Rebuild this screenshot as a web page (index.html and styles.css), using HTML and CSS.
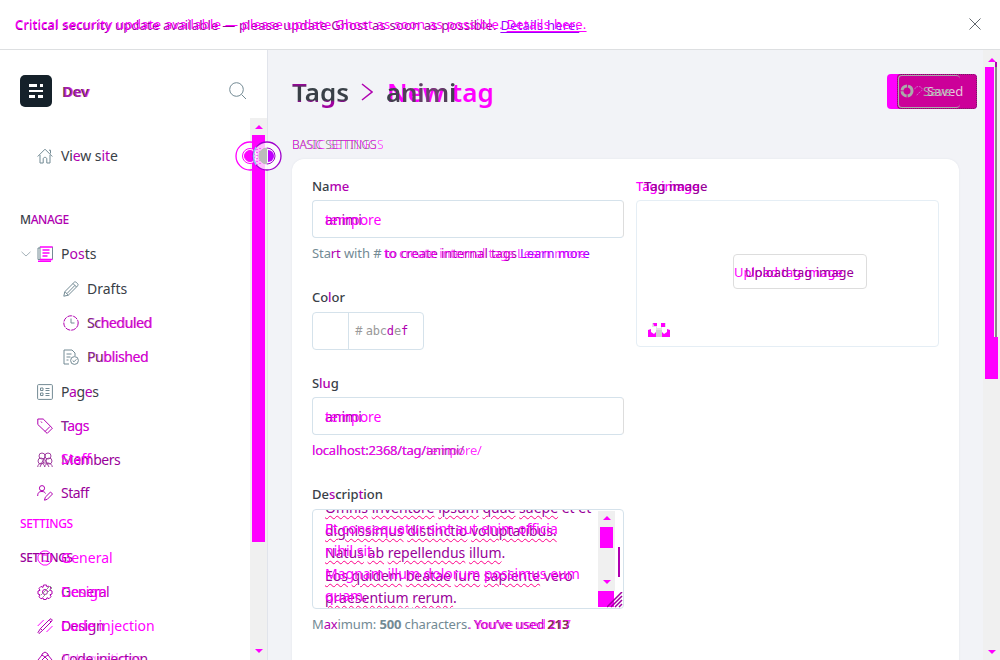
FILE: index.html
```
<!DOCTYPE html>
<html lang="en"><head><meta charset="utf-8"><title>Tags</title><link rel="stylesheet" href="styles.css"></head>
<body>
<header class="banner">
  <div class="stack"><p class="b banner-base">Critical security update available — please update Ghost as soon as possible. <u>Details here.</u></p><p class="m banner-new">Critical security update available — please update Ghost as soon as possible. <u>Details here.</u></p></div>
  <svg class="close" viewBox="0 0 12 12"><path d="M.5.5l11 11M11.5.5l-11 11"/></svg>
</header>
<div class="app">
<aside class="sidebar">
  <div class="brand">
    <svg class="logo" viewBox="0 0 32 32"><rect width="32" height="32" rx="5" fill="#15212a"/><path fill="#fff" d="M9 9h8v3H9zM20 9h3v3h-3zM9 15h14v2H9zM9 20h6v3H9zM18 20h5v3h-5z"/></svg>
    <strong class="stack"><span>Dev</span><span class="m half">Dev</span></strong>
    <svg class="search" viewBox="0 0 18 18"><circle cx="7.5" cy="7.5" r="6.8"/><path d="M12.5 12.5l4.5 4.5"/></svg>
  </div>
  <div class="scroller">
    <nav class="nav">
      <a class="row view"><svg viewBox="0 0 16 16"><path d="M.7 8.5L8 1.2l7.3 7.3M3 7v8h3.2v-4c0-2.2 3.6-2.2 3.6 0v4H13V7M12 2.2h1.5v3.3"/></svg><span>Vi<i>e</i>w s<i>it</i>e</span></a>
      <h2 class="head">M<i>ANAGE</i></h2>
      <a class="row"><svg class="caret" viewBox="0 0 10 6"><path d="M.5.8L5 5 9.500.8"/></svg><svg class="post" viewBox="0 0 16 16"><path d="M3 13.500H1V2h2M3 .7v12.800M15.500.7v12.800"/><path class="pm" d="M3 1h12.500M3 13.500h12.500M1 15.300h13" stroke-width="1.500"/><path class="pm" d="M5.500 4h7M5.500 7h7M5.500 10h5" stroke-width="1.400"/></svg><span>P<i>os</i>ts</span></a>
      <a class="row sub"><svg viewBox="0 0 16 16"><path d="M.8 15.200l1-4.500L11.500 1c1-1 4.500 2.500 3.500 3.500l-9.700 9.700zM2 10.700l3.300 3.500M10 2.500l3.500 3.500M4 12.500L12 4.300"/></svg><span>Drafts</span></a>
      <a class="row sub"><svg viewBox="0 0 16 16"><circle class="pb" cx="8" cy="8" r="7.200" stroke-dasharray="5 1"/><path d="M8 3.500V8h3.500"/></svg><div class="stack"><span class="tight">Sc<i>heduled</i></span><span class="m trail tight">Scheduled</span></div></a>
      <a class="row sub"><svg viewBox="0 0 16 16"><path d="M6 15H1V1h8l3 3v3M3.500 5h5M3.500 8h4M3.500 11h2"/><circle cx="11.500" cy="11.500" r="3.900"/><path d="M9.700 11.500l1.300 1.300 2.400-2.500"/></svg><div class="stack"><span class="tight">Pu<i>blished</i></span><span class="m trail tighter">Published</span></div></a>
      <a class="row lower"><svg viewBox="0 0 16 16"><rect x=".6" y=".6" width="14.800" height="14.800" rx="1"/><path d="M3.500 4H6v2.500H3.500zM3.500 9H6v2.500H3.500zM8.500 4.500h4M8.500 6.500h4M8.500 9.500h4M8.500 11.500h4"/></svg><span class="tight">P<i>a</i>g<i>e</i>s</span></a>
      <a class="row"><svg class="pb" viewBox="0 0 16 16"><path d="M.8 1h5.400l9.200 9.200-5.200 5.200L.8 6.500zM4 3.500l1 1.300M13 8.500l-5 5"/></svg><div class="stack"><span class="tighter">T<i>ags</i></span><span class="m trail tighter after">Tags</span></div></a>
      <a class="row"><svg class="pb mixed" viewBox="0 0 16 16"><circle cx="5" cy="4" r="3"/><circle cx="11" cy="4" r="3"/><circle cx="4" cy="9" r="3"/><circle cx="12" cy="9" r="3"/><path d="M.7 15c.5-5 6.300-5 7 0 .7-5 7-5 7.600 0M3 15l4-9 5 9M5.500 11h6"/></svg><div class="stack"><span class="b tighter">Members</span><span class="m raise">Staff</span></div></a>
      <a class="row staff"><svg class="pb" viewBox="0 0 16 16"><circle cx="5" cy="3.200" r="2.600"/><path d="M.7 11c0-3.500 1.500-4.500 4.300-4.500 2 0 3 .8 3.500 2M7.500 15.200l.8-3L13.500 7l2 2-5.200 5.300z"/></svg><span class="b tighter">Staff</span></a>
      <h2 class="head m first">SETTINGS</h2>
      <div class="row mix"><h2 class="b">SETTINGS</h2><div class="over"><svg class="pmx" viewBox="0 0 16 16"><path d="M6 1h4l3 2 2 3v4l-2 3-3 2H6l-3-2-2-3V6l2-3zM5 5h6M5 11h6"/></svg><span class="m">General</span></div></div>
      <a class="row"><svg class="pb" viewBox="0 0 16 16"><path d="M6.500 1h3l.5 2 2-1 2 2-1 2 2 1v3l-2 .7 1 2-2 2-2-1-.8 1.800H6.500L6 13.800l-2 1-2-2 1-2L1 10V7l2-.6-1-2 2-2 2 1z"/><circle cx="8" cy="8" r="2.500"/><path class="wand" d="M4 11l9-9 2 2-9 9"/></svg><div class="stack"><span class="tighter">G<i>eneral</i></span><span class="m">Design</span></div></a>
      <a class="row"><svg class="pb" viewBox="0 0 16 16"><path d="M1 14.500l2.500-4L12 2l2-1.300L15.300 2 14 4l-8.500 8.500-3.500 3zM12.500 2.500l1.500 1.500M3.500 10.500l2 2"/><path class="pmx" d="M.7 8l6-6M9.500 14l6-6"/></svg><div class="stack"><span class="b tight">Design</span><span class="m">Code injection</span></div></a>
      <a class="row last"><svg class="pb" viewBox="0 0 16 16"><path d="M5 5V3l3-2 3 2v2M1 9l4-5 3 2 3-2 4 5-4 5H5zM5 9l3-3 3 3-3 3z"/></svg><div class="stack"><span class="b tighter">Code injection</span><span class="m trail">Integrations</span></div></a>
    </nav>
    <div class="bar side"><div class="up"></div><div class="thumb"></div><div class="down"></div></div>
  </div>
  <svg class="handles" viewBox="0 0 48 34"><circle cx="15" cy="17" r="14" stroke="#f0f" stroke-width="1.300"/><circle cx="15" cy="17" r="7.500" fill="#fff" stroke="#f0f"/><circle cx="15" cy="17" r="5.500" fill="#f0f" stroke="#f0f"/><circle cx="32" cy="17" r="14" fill="#fff" fill-opacity=".75" stroke="#a000cc" stroke-width="1.300"/><path d="M19 9v16M22 7v20M25 9v18" stroke="#f0f" stroke-dasharray="1 2"/><path d="M32 9a8 8 0 0 0 0 16" fill="#bbb" stroke="#bbb"/><path d="M32 9a8 8 0 0 1 0 16" stroke="#a000cc"/><path d="M33 11a6 6 0 0 1 0 12z" fill="#c000ff" stroke="none"/><path d="M21 8q-5 9 0 18" stroke="#8ccbed" stroke-width="1.500"/></svg>
</aside>
<main class="main">
  <div class="content">
    <div class="top">
      <h1><span class="title">Tags</span><svg class="chev" viewBox="0 0 12 18"><path d="M1 1l10 8L1 17"/></svg><div class="stack"><span class="m newtag">New tag</span><span class="animi">animi</span></div></h1>
      <div class="save"><div class="stack saved"><span>Saved</span><span class="retry"><svg viewBox="0 0 14 14"><circle cx="7" cy="7" r="5" stroke="#aaa" stroke-width="3" stroke-dasharray="7 1" fill="none"/></svg><svg class="tick" viewBox="0 0 10 12"><path d="M1 4c0-4 8-4 8 0 0 3-4 3-6 7"/></svg>Save</span></div></div>
    </div>
    <h3 class="stack section"><span class="grey">BASIC SETTINGS</span><span class="m">BASIC SETTINGS</span></h3>
    <section class="card">
      <div class="fields">
        <label>Na<i>me</i></label>
        <div class="input"><div class="stack"><span class="b dense">animi</span><span class="m">tempore</span></div></div>
        <div class="help stack n"><span class="first-hint">Sta<i>rt</i> with # <i>to create internal tags</i> <u>Learn more</u></span><span class="m hint second-hint"><q>Start with # </q>to create internal tags Learn more</span></div>
        <label>Co<i>l</i>or</label>
        <div class="color"><span class="swatch"></span><span class="hash">#</span><span class="mono">abc<i>d</i>e<i>f</i></span></div>
        <label>S<i>lu</i>g</label>
        <div class="input"><div class="stack"><span class="b dense">animi</span><span class="m">tempore</span></div></div>
        <div class="help stack url"><span>localhost:2368/tag/animi/</span><span class="m">localhost:2368/tag/tempore/</span></div>
        <label class="desc">De<i>s</i>crip<i>t</i>ion</label>
        <div class="area">
          <div class="stack words">
            <div class="b latin"><p><u>Omnis</u> <u>inventore</u> <u>ipsum</u> <u>quae</u> <u>saepe</u> et et</p><p><u>dignissimus</u> <u>distinctio</u> <u>voluptatibus.</u></p><p><u>Natus</u> <u>ab</u> <u>repellendus</u> <u>illum</u>.</p><p><u>Eos</u> <u>quidem</u> <u>beatae</u> <u>iure</u> <u>sapiente</u> vero</p><p><u>praesentium</u> <u>rerum</u>.</p></div>
            <div class="m latin over-latin"><p>&nbsp;</p><p>Et consequatur sint aut enim officia</p><p>nihil sit.</p><p>Magnam illum dolorum possimus eum</p><p>quam.</p></div>
          </div>
          <div class="bars"><div class="bar mini"><div class="up"></div><div class="thumb"></div><div class="down"></div></div><div class="corner"></div></div>
          <div class="edge"><div class="line"></div></div>
          <svg class="grip" viewBox="0 0 16 16"><path d="M0 15L15 0M4 15L15 4M8 15l7-7M12 15l3-3"/></svg>
        </div>
        <div class="help stack max"><span class="count">M<i>ax</i>imum: <b>500</b> characters. <i>You’ve used <strong>213</strong></i></span><span class="m hint count-new"><q>Maximum: 500 characters</q>. You’ve used 217</span></div>
      </div>
      <div class="picture">
        <div class="stack label"><span class="m">Tag image</span><span class="b shift">Tag image</span></div>
        <div class="drop"><div class="upload"><div class="stack"><span class="m">Upload tag image</span><span class="b up-base">Upload tag image</span></div></div>
          <svg class="unsplash" viewBox="0 0 22 14"><path fill="#e4e4e4" d="M4 0h14v4h-4v5H8V4H4z"/><path fill="#fff" d="M9 0h4v5H9z"/><path fill="#f0f" d="M5 0h4v3H6zM13 0h4v4h-4zM0 7l3-1v3l3 2 2-2v5H0zM14 9l2 2 3-2V6l3 1v7h-8z"/><path fill="#d0d0d0" d="M8 7h6v7H8z"/></svg></div>
      </div>
    </section>
  </div>
  <div class="bar page"><div class="up"></div><div class="track"><div class="thumb"></div><div class="grayline"></div></div><div class="down"></div></div>
</main>
</div>
</body></html>
```
FILE: styles.css
```
*{box-sizing:border-box;margin:0;padding:0}
body{width:1000px;height:660px;overflow:hidden;background:#fff;color:#394047;font:14px/20px "Noto Sans",sans-serif;display:flex;flex-direction:column}
i{font-style:normal;color:#b000b0}
svg{fill:none;stroke:#738a94;flex:none;display:block}
.stack{display:grid;width:max-content}
.stack>*{grid-area:1/1;white-space:nowrap}
.m{color:#f0f}
.b{color:#909}
.banner{height:50px;border-bottom:1px solid #dddfe1;display:flex;align-items:center;justify-content:space-between;padding:0 19px 0 15px;font-size:13px}
.banner u{text-underline-offset:2px}
.banner-base u{color:#90f}
.banner-base{letter-spacing:.19px}
.banner-new{letter-spacing:.27px;margin-top:-1px}
.close{width:12px;height:12px;stroke:#394047;stroke-width:.8;margin-top:-2px}
.app{flex:1;display:flex;min-height:0}
.sidebar{width:268px;border-right:1px solid #e1e4eb;display:flex;flex-direction:column;position:relative}
.brand{height:68px;padding:14px 20px 0 20px;display:flex;align-items:center;flex:none}
.logo{width:32px;height:32px;stroke:none;margin-right:10px}
.brand strong{font-size:15px;letter-spacing:-.5px}
.half{opacity:.55;margin-left:1px}
.search{width:18px;height:18px;margin-left:auto}
.scroller{display:flex;flex:1;min-height:0}
.nav{width:250px;overflow:hidden;padding:21px 0 0 20px}
.row{display:flex;align-items:center;height:34px;padding-left:17px}
.row>svg,.over svg{width:16px;height:16px;margin-right:8px}
.view{margin-bottom:30px;letter-spacing:-.1px}
.head,.mix h2{font-size:12px;font-weight:500;line-height:34px;letter-spacing:-.4px}
.row .caret{width:10px;height:6px;margin:0 6px 0 -16px;stroke:#a5b2b9}
.sub{padding-left:43px;position:relative;top:1px}
.lower{margin-top:2px}
.tight{letter-spacing:-.4px}
.tighter{letter-spacing:-.5px}
.trail{margin-left:1px;opacity:.45}
.after{margin-left:0}
.pm,.pmx{stroke:#f0f}
.pb{stroke:#b000b0}
.mixed{stroke:#a040a0}
.wand{stroke:#999}
.raise{margin-top:-1px}
.staff{margin-top:-1px}
.head.first{margin-top:-3px}
.mix{padding-left:0}
.mix h2{width:57px}
.over{display:flex;align-items:center;margin-left:-40px}
.last{margin-top:-1px}
.handles{position:absolute;left:235px;top:89px;width:48px;height:34px}
.bar{width:17px;background:#f0f0f0;display:flex;flex-direction:column;flex:none}
.up,.down{width:0;height:0;border:4px solid transparent;margin:0 auto}
.up{border-top:0;border-bottom-color:#f0f}
.down{border-bottom:0;border-top-color:#f0f;margin-top:auto}
.bar .thumb{background:#f0f;width:13px;margin-left:2px}
.side{padding:7px 0}
.side .thumb{height:407px;margin-top:6px}
.main{flex:1;display:flex;background:#f2f3f7;min-width:0}
.content{width:715px;padding-left:24px;overflow:hidden}
.top{height:84px;display:flex;justify-content:space-between;align-items:center;padding-right:6px}
h1{font-size:26px;line-height:36px;display:flex;align-items:center;font-weight:600}
.title,.animi{background:linear-gradient(#a000a0 28%,#394047 38%,#394047 72%,#a000a0 78%);background-clip:text;color:transparent;letter-spacing:0}
.animi{letter-spacing:-.3px;background-image:linear-gradient(90deg,#394047,#714071 45%,#394047 65%,#a000a0)}
.title{width:69px}
.chev{width:12px;height:18px;margin-right:13px;stroke:#b000b0;stroke-width:1.500}
.newtag{letter-spacing:.2px;margin-left:1px}
.save{width:90px;height:35px;border-radius:4px;background:#f0f;padding-left:10px;margin-top:-2px}
.saved{width:80px;height:35px;border:1px dotted #702060;border-radius:4px;background:#c09;color:#e9c4dc;font-size:13px;align-items:center}
.saved>span:first-child{padding-left:29px}
.retry{width:62px;height:33px;border:1px solid #aaa;border-right:0;border-radius:4px;color:#aaa;display:flex;align-items:center}
.retry svg{width:14px;height:14px;margin:0 0 0 1px}
.retry .tick{width:9px;height:12px;stroke:#d070d0;stroke-dasharray:2 1;margin:0}
.section{font-size:12px;font-weight:300;line-height:18px;letter-spacing:-.4px;margin-top:2px}
.section .m{opacity:.8;letter-spacing:.15px}
.grey{color:#777}
.card{width:667px;height:520px;margin-top:5px;background:#fff;border-radius:12px;box-shadow:0 0 2px #dfe2e9;padding:17px 20px;display:flex;gap:12px}
.fields{width:312px;flex:none}
label,.label{font-size:13px;font-weight:500;line-height:20px;letter-spacing:-.05px}
label{display:block}
.input{height:38px;border:1px solid #d5e2eb;border-right-color:#ddd;border-radius:4px;margin-top:4px;padding:1px 12px 0;display:flex;align-items:center}
.dense{letter-spacing:0}
.help{font-size:13px;line-height:20px;color:#738a94;margin-top:5px}
.help u{text-decoration:none;color:#90f}
.hint{opacity:.75}
q{visibility:hidden;quotes:none}
.first-hint{letter-spacing:-.1px}
.second-hint{letter-spacing:-.18px}
.n{margin-bottom:24px}
.color{width:112px;height:38px;margin:5px 0 23px;border:1px solid #d5e2eb;border-radius:4px;display:flex;align-items:center;color:#999;font-size:12px}
.swatch{width:36px;height:36px;border-right:1px solid #d5e2eb;margin-right:6px}
.hash{margin-right:3px}
.mono{font-family:"DejaVu Sans Mono",monospace;letter-spacing:-.2px}
.url{margin-bottom:23px}
.url span{color:#9a309a;letter-spacing:-.2px}
.url .m{color:#f0f;opacity:.8}
.desc{padding-top:1px}
.area{height:100px;border:1px solid #d5e2eb;border-radius:4px;margin-top:5px;padding-left:12px;display:flex;overflow:hidden;position:relative}
.words{width:273px;align-content:start;margin-top:-13px}
.latin p{height:22.500px;line-height:22.500px;font-size:14px}
.latin u{text-decoration:underline wavy #f08 1px;text-underline-offset:2px}
.over-latin{margin-top:-2px}
.bars{width:17px;padding-top:1px}
.mini{height:80px;padding:5px 0 7px}
.mini .thumb{height:21px;margin-top:7px}
.corner{width:16px;height:16px;background:#f0f}
.edge{padding:37px 0 0 3px}
.line{width:2px;height:30px;background:#b000b0}
.grip{position:absolute;right:0;bottom:0;width:16px;height:16px;stroke:#a000a0;stroke-width:1.500}
.max{margin-top:5px}
.count{letter-spacing:-.13px}
.count-new{letter-spacing:-.08px}
.max strong{color:#7a3050}
.picture{width:303px}
.shift{margin-left:8px}
.drop{height:147px;border:1px solid #e5eef5;border-radius:4px;margin-top:4px;padding:53px 0 0 11px;display:flex;flex-direction:column}
.upload{width:134px;height:35px;border:1px solid #ddd;border-radius:4px;margin-left:85px;display:flex;align-items:center;font-size:13px}
.up-base{margin-left:11px}
.unsplash{width:22px;height:14px;margin-top:34px;stroke:none}
.page{width:17px;padding:8px 0 6px}
.track{display:flex;margin-top:5px}
.page .thumb{width:13px;height:312px;clip-path:polygon(0 0,9px 0,9px 270px,13px 270px,13px 312px,0 312px)}
.grayline{width:2px;height:275px;margin:-5px 0 0 -3px;background:linear-gradient(#b000b0 5px,#888 5px)}
```
